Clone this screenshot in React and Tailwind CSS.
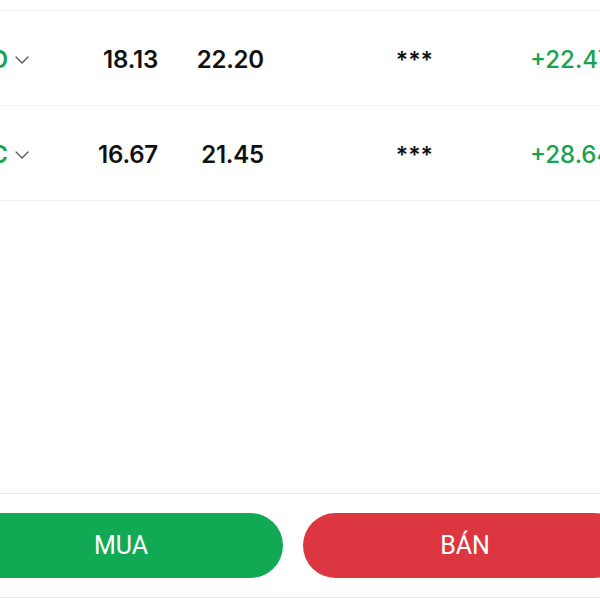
import { ChevronDown } from 'lucide-react'

const rows = [
  { symbol: 'VND', buy: '18.13', sell: '22.20', vol: '***', change: '+22.47%' },
  { symbol: 'VIC', buy: '16.67', sell: '21.45', vol: '***', change: '+28.64%' },
]

function Row({ item }) {
  return (
    <div className="flex h-[95px] items-center border-b border-[#efefef] pt-[4px]">
      <div className="flex w-[94px] items-center justify-end gap-[2px]">
        <span className="text-[24px] font-semibold text-[#17a34f]">{item.symbol}</span>
        <ChevronDown className="h-6 w-6 text-[#555]" strokeWidth={1.3} />
      </div>
      <div className="w-[124px] text-right text-[24px] font-semibold tracking-[-0.2px] text-[#111]">{item.buy}</div>
      <div className="w-[106px] text-right text-[24px] font-semibold tracking-[-0.2px] text-[#111]">{item.sell}</div>
      <div className="w-[266px] pr-[97px] text-right text-[23px] font-semibold text-[#111]">{item.vol}</div>
      <div className="w-[150px] whitespace-nowrap text-[24px] font-medium text-[#17a34f]">{item.change}</div>
    </div>
  )
}

export default function App() {
  return (
    <div className="h-[600px] w-[600px] overflow-hidden bg-white" style={{ fontFamily: 'Inter, "Noto Sans", sans-serif' }}>
      <div className="flex h-full w-[740px] -ml-[60px] flex-col">
        <div className="h-[11px] border-b border-[#efefef]" />
        {rows.map((r) => (
          <Row key={r.symbol} item={r} />
        ))}
        <div className="flex-1" />
        <div className="flex gap-[20px] border-y border-[#e6e6e6] py-[19px] pl-[19px] mb-[2px]" style={{ fontFamily: 'Roboto, sans-serif' }}>
          <button className="flex h-[65px] w-[324px] items-center justify-center rounded-full bg-[#12a955] text-[25px] text-white">
            MUA
          </button>
          <button className="flex h-[65px] w-[324px] items-center justify-center rounded-full bg-[#dc3741] text-[25px] text-white">
            BÁN
          </button>
        </div>
      </div>
    </div>
  )
}
